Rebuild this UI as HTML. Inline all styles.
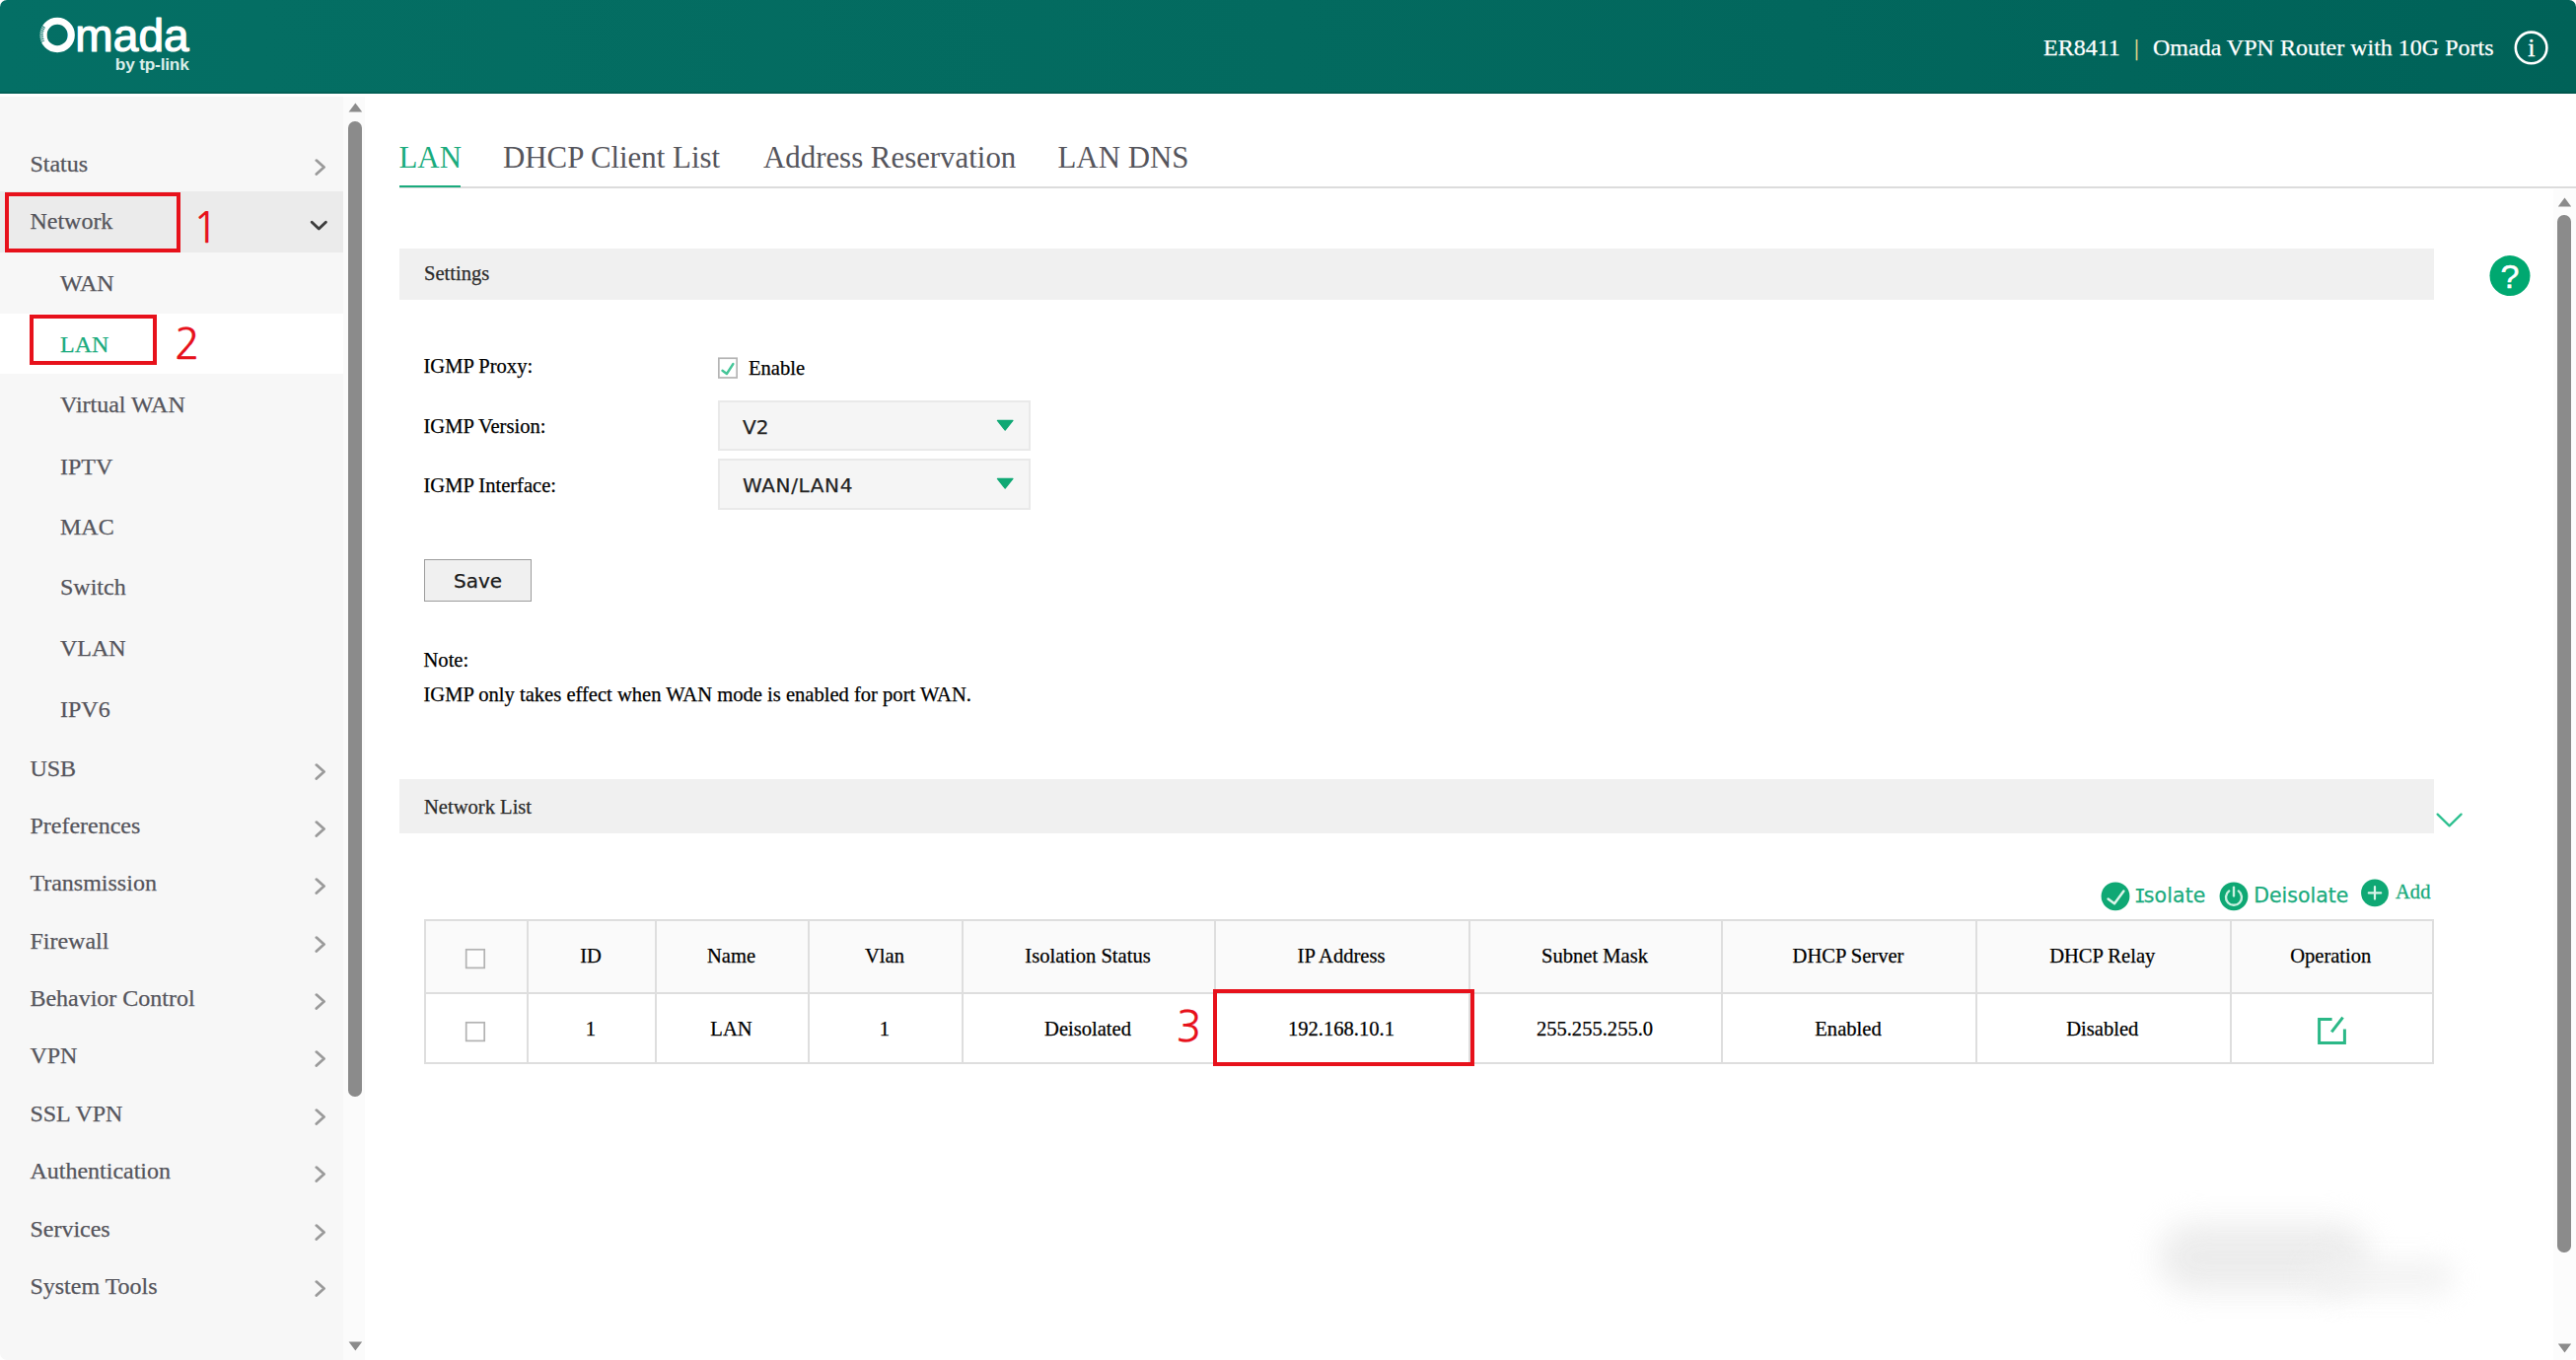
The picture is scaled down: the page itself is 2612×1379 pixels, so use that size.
<!DOCTYPE html>
<html lang="en">
<head>
<meta charset="utf-8">
<title>Omada ER8411 - Network - LAN</title>
<style>
*{box-sizing:border-box;margin:0;padding:0}
html,body{width:2612px;height:1379px;background:#fff;overflow:hidden}
body{font-family:"Liberation Serif",serif;color:#000;-webkit-text-stroke:.25px currentColor}
#app{position:relative;width:2612px;height:1379px;overflow:hidden;border-radius:7px;background:#fff}
.abs{position:absolute}
.t{position:absolute;white-space:nowrap}

/* header */
#hdr{position:absolute;left:0;top:0;width:2612px;height:95px;background:linear-gradient(to right,#046f65 0%,#046e63 10%,#036a5f 50%,#02675d 70%,#006359 95%,#006258 100%);box-shadow:inset 0 -2px 0 rgba(0,30,25,.16)}
#hdr .ttl{position:absolute;top:33px;height:30px;line-height:30px;font-size:24px;color:#fff;white-space:nowrap}

/* sidebar */
#side{position:absolute;left:0;top:97.5px;width:348px;height:1281.5px;background:#f7f7f7}
#strack{position:absolute;left:348px;top:97.5px;width:22px;height:1281.5px;background:#fbfbfb}
.mi{position:absolute;left:30.4px;height:30px;line-height:30px;font-size:24px;color:#55555c;white-space:nowrap}
.si{position:absolute;left:61px;height:30px;line-height:30px;font-size:24px;color:#55555c;white-space:nowrap}
.chev{position:absolute;left:319px;width:12px;height:18px}
.red{position:absolute;border:4px solid #e7111b}
.num{position:absolute;font-family:"NanumGothic","Liberation Sans",sans-serif;color:#e7111b;white-space:nowrap;line-height:1}

/* content */
.tab{position:absolute;-webkit-text-stroke:0;top:140px;height:40px;line-height:40px;font-size:30.86px;color:#55555c;white-space:nowrap}
.bar{position:absolute;left:404.5px;width:2063.5px;background:#f0f0f0}
.bar span{position:absolute;left:25.5px;font-size:20.57px;color:#2b2b2b;white-space:nowrap;line-height:26px;height:26px}
.lbl{position:absolute;left:429.5px;font-size:20.57px;line-height:26px;height:26px;white-space:nowrap;color:#000}
.sel{position:absolute;left:728px;width:317px;height:51px;background:#f5f5f5;border:2px solid #e9e9e9}
.sel span{position:absolute;left:23px;top:11px;font-family:"DejaVu Sans",sans-serif;font-size:20px;line-height:28px;color:#222;white-space:nowrap}
.sel svg{position:absolute;left:280px;top:17.2px}
.sans{font-family:"DejaVu Sans",sans-serif}
.g{color:#1aab7d}

/* table */
#tbl{position:absolute;left:430px;top:932px;width:2038px;height:147px}
.vl{position:absolute;top:0;width:2px;height:147px;background:#dedede}
.hl{position:absolute;left:0;width:2038px;height:2px;background:#dedede}
.th,.td{position:absolute;font-size:20.57px;line-height:26px;height:26px;white-space:nowrap;text-align:center;color:#000}
.cb{position:absolute;width:20px;height:20px;border:1.5px solid #b3b3b3;background:#fff}
</style>
</head>
<body>
<div id="app">

<!-- ===== HEADER ===== -->
<div id="hdr">
  <svg class="abs" style="left:30px;top:8px" width="180" height="78" viewBox="0 0 180 78">
    <text font-family="Liberation Sans, sans-serif" fill="#fff"><tspan x="10.9" y="43.3" font-size="44">O</tspan><tspan x="46.3" y="43.5" font-size="46" stroke="#fff" stroke-width="1.2" stroke-linejoin="round" letter-spacing="0.1">mada</tspan></text>
    <circle cx="28.1" cy="27.5" r="14.2" fill="none" stroke="#fff" stroke-width="7.1"/>
    <path d="M14.15 18.77 A16.1 16.1 0 0 0 13.45 34.61" fill="none" stroke="#046f64" stroke-width="4.4" stroke-dasharray="0.95 0.95"/>
    <text x="86.8" y="62.6" font-family="Liberation Sans, sans-serif" font-weight="700" font-size="17.3" fill="#d9ede9" letter-spacing="-0.2">by tp-link</text>
  </svg>
  <div class="ttl" style="left:2072px">ER8411</div>
  <div class="ttl" style="left:2164px;color:#e6dc8e">|</div>
  <div class="ttl" style="left:2183px">Omada VPN Router with 10G Ports</div>
  <svg class="abs" style="left:2547px;top:29px" width="40" height="40" viewBox="0 0 40 40">
    <circle cx="19.6" cy="19.4" r="15.8" fill="none" stroke="#fff" stroke-width="2.6"/>
    <text x="19.8" y="28.4" text-anchor="middle" font-family="Liberation Serif, serif" font-size="26" fill="#fff" stroke="#fff" stroke-width=".4">i</text>
  </svg>
</div>

<!-- ===== SIDEBAR ===== -->
<div id="side"></div>
<div id="strack"></div>
<!--SIDE-->
<div class="abs" style="left:0;top:194px;width:348px;height:62px;background:#ebebeb"></div>
<div class="abs" style="left:0;top:318px;width:348px;height:61px;background:#fff"></div>
<div class="mi" style="top:151.4px">Status</div>
<svg class="chev" style="top:160.2px" viewBox="0 0 12 18"><path d="M1.8 2.6 L9.6 9.6 L1.8 16.6" fill="none" stroke="#9a9a9a" stroke-width="2.7" stroke-linecap="round" stroke-linejoin="round"/></svg>
<div class="mi" style="top:209.4px">Network</div>
<svg class="abs" style="left:312px;top:219.5px" width="24" height="18" viewBox="0 0 24 18"><path d="M4.2 5.2 L11.3 12 L18.4 5.2" fill="none" stroke="#3c3c3c" stroke-width="2.9" stroke-linecap="round" stroke-linejoin="round"/></svg>
<div class="mi" style="top:763.9px">USB</div>
<svg class="chev" style="top:772.7px" viewBox="0 0 12 18"><path d="M1.8 2.6 L9.6 9.6 L1.8 16.6" fill="none" stroke="#9a9a9a" stroke-width="2.7" stroke-linecap="round" stroke-linejoin="round"/></svg>
<div class="mi" style="top:821.7px">Preferences</div>
<svg class="chev" style="top:830.5px" viewBox="0 0 12 18"><path d="M1.8 2.6 L9.6 9.6 L1.8 16.6" fill="none" stroke="#9a9a9a" stroke-width="2.7" stroke-linecap="round" stroke-linejoin="round"/></svg>
<div class="mi" style="top:879.7px">Transmission</div>
<svg class="chev" style="top:888.5px" viewBox="0 0 12 18"><path d="M1.8 2.6 L9.6 9.6 L1.8 16.6" fill="none" stroke="#9a9a9a" stroke-width="2.7" stroke-linecap="round" stroke-linejoin="round"/></svg>
<div class="mi" style="top:938.8px">Firewall</div>
<svg class="chev" style="top:947.6px" viewBox="0 0 12 18"><path d="M1.8 2.6 L9.6 9.6 L1.8 16.6" fill="none" stroke="#9a9a9a" stroke-width="2.7" stroke-linecap="round" stroke-linejoin="round"/></svg>
<div class="mi" style="top:997.1px">Behavior Control</div>
<svg class="chev" style="top:1005.9px" viewBox="0 0 12 18"><path d="M1.8 2.6 L9.6 9.6 L1.8 16.6" fill="none" stroke="#9a9a9a" stroke-width="2.7" stroke-linecap="round" stroke-linejoin="round"/></svg>
<div class="mi" style="top:1055.4px">VPN</div>
<svg class="chev" style="top:1064.2px" viewBox="0 0 12 18"><path d="M1.8 2.6 L9.6 9.6 L1.8 16.6" fill="none" stroke="#9a9a9a" stroke-width="2.7" stroke-linecap="round" stroke-linejoin="round"/></svg>
<div class="mi" style="top:1113.7px">SSL VPN</div>
<svg class="chev" style="top:1122.5px" viewBox="0 0 12 18"><path d="M1.8 2.6 L9.6 9.6 L1.8 16.6" fill="none" stroke="#9a9a9a" stroke-width="2.7" stroke-linecap="round" stroke-linejoin="round"/></svg>
<div class="mi" style="top:1172.0px">Authentication</div>
<svg class="chev" style="top:1180.8px" viewBox="0 0 12 18"><path d="M1.8 2.6 L9.6 9.6 L1.8 16.6" fill="none" stroke="#9a9a9a" stroke-width="2.7" stroke-linecap="round" stroke-linejoin="round"/></svg>
<div class="mi" style="top:1230.9px">Services</div>
<svg class="chev" style="top:1239.7px" viewBox="0 0 12 18"><path d="M1.8 2.6 L9.6 9.6 L1.8 16.6" fill="none" stroke="#9a9a9a" stroke-width="2.7" stroke-linecap="round" stroke-linejoin="round"/></svg>
<div class="mi" style="top:1288.6px">System Tools</div>
<svg class="chev" style="top:1297.4px" viewBox="0 0 12 18"><path d="M1.8 2.6 L9.6 9.6 L1.8 16.6" fill="none" stroke="#9a9a9a" stroke-width="2.7" stroke-linecap="round" stroke-linejoin="round"/></svg>
<div class="si" style="top:271.9px">WAN</div>
<div class="si" style="top:333.6px;color:#1aab7d">LAN</div>
<div class="si" style="top:395.3px">Virtual WAN</div>
<div class="si" style="top:458.0px">IPTV</div>
<div class="si" style="top:518.7px">MAC</div>
<div class="si" style="top:580.4px">Switch</div>
<div class="si" style="top:642.2px">VLAN</div>
<div class="si" style="top:703.9px">IPV6</div>
<div class="red" style="left:5px;top:195px;width:178px;height:61px"></div>
<div class="num" style="left:195.5px;top:210.3px;font-size:42.6px">1</div>
<div class="red" style="left:29.5px;top:318.5px;width:129.8px;height:51.6px"></div>
<div class="num" style="left:177px;top:327.9px;font-size:42.6px">2</div>
<svg class="abs" style="left:353px;top:103px" width="15" height="12" viewBox="0 0 15 12"><path d="M0.6 10.4 L7.4 1.6 L14.2 10.4 Z" fill="#8b8b8b"/></svg>
<div class="abs" style="left:353.4px;top:123px;width:13.6px;height:988.5px;border-radius:6.8px;background:#8b8b8b"></div>
<svg class="abs" style="left:353px;top:1359px" width="15" height="12" viewBox="0 0 15 12"><path d="M0.6 1.6 L14.2 1.6 L7.4 10.4 Z" fill="#8b8b8b"/></svg>
<!--/SIDE-->

<!-- ===== CONTENT ===== -->
<!--CONTENT-->
<div class="tab" style="left:404.5px;color:#1aab7d">LAN</div>
<div class="tab" style="left:510px">DHCP Client List</div>
<div class="tab" style="left:774px">Address Reservation</div>
<div class="tab" style="left:1072.5px">LAN DNS</div>
<div class="abs" style="left:404.5px;top:189px;width:2208px;height:2px;background:#dcdcdc"></div>
<div class="abs" style="left:404.5px;top:188px;width:62.5px;height:2px;background:#1aab7d"></div>
<div class="bar" style="top:252px;height:52px"><span style="top:12px">Settings</span></div>
<svg class="abs" style="left:2524px;top:259px" width="42" height="42" viewBox="0 0 42 42"><circle cx="21" cy="20.6" r="20.5" fill="#00a870"/><text x="21" y="32.6" text-anchor="middle" font-family="Liberation Sans, sans-serif" font-size="34" fill="#fff" stroke="#fff" stroke-width=".5">?</text></svg>
<div class="lbl" style="top:358.1px">IGMP Proxy:</div>
<div class="lbl" style="top:419.3px">IGMP Version:</div>
<div class="lbl" style="top:478.8px">IGMP Interface:</div>
<svg class="abs" style="left:726px;top:360px" width="26" height="28" viewBox="0 0 26 28"><rect x="2.85" y="3.25" width="18.3" height="19.7" fill="#fff" stroke="#b4b4b4" stroke-width="1.7"/><path d="M6.5 15.7 L10.9 19 L17.4 9" fill="none" stroke="#45c598" stroke-width="2.4" stroke-linecap="round" stroke-linejoin="round"/></svg>
<div class="lbl" style="left:759px;top:359.6px">Enable</div>
<div class="sel" style="top:406px"><span>V2</span><svg width="20" height="14" viewBox="0 0 20 14"><path d="M1.4 1.4 L17 1.4 L9.2 11.2 Z" fill="#0fa874" stroke="#0fa874" stroke-width="1.2" stroke-linejoin="round"/></svg></div>
<div class="sel" style="top:465.3px;height:51.5px"><span style="letter-spacing:.62px">WAN/LAN4</span><svg width="20" height="14" viewBox="0 0 20 14"><path d="M1.4 1.4 L17 1.4 L9.2 11.2 Z" fill="#0fa874" stroke="#0fa874" stroke-width="1.2" stroke-linejoin="round"/></svg></div>
<div class="abs sans" style="left:430px;top:567px;width:109px;height:43px;background:#f0f0f0;border:1.4px solid #9c9c9c;font-size:20px;line-height:28px;padding-top:6.9px;text-align:center;color:#1a1a1a">Save</div>
<div class="lbl" style="top:656.3px">Note:</div>
<div class="lbl" style="top:690.6px">IGMP only takes effect when WAN mode is enabled for port WAN.</div>
<div class="bar" style="top:790px;height:54.5px"><span style="top:15px">Network List</span></div>
<svg class="abs" style="left:2468px;top:820px" width="32" height="24" viewBox="0 0 32 24"><path d="M3.6 5.6 L15.6 17.4 L27.6 5.6" fill="none" stroke="#2fc090" stroke-width="2.3" stroke-linecap="round" stroke-linejoin="round"/></svg>
<svg class="abs" style="left:2129px;top:893px" width="32" height="32" viewBox="0 0 32 32"><circle cx="16" cy="15.8" r="14.4" fill="#0fa874"/><path d="M8.6 18.6 L15 23.2 L24.4 10.6" fill="none" stroke="#dcf5ea" stroke-width="2.5" stroke-linecap="round" stroke-linejoin="round"/></svg>
<div class="t sans g" style="letter-spacing:.08px;-webkit-text-stroke:.25px #1aab7d;left:2165.6px;top:893.9px;font-size:20.5px;line-height:28px"><span style="font-family:DejaVu Sans Mono,monospace;font-size:19.5px;letter-spacing:-1.9px;margin-left:-1.6px">I</span>solate</div>
<svg class="abs" style="left:2249px;top:893px" width="32" height="32" viewBox="0 0 32 32"><circle cx="16" cy="15.8" r="14.4" fill="#0fa874"/><path d="M11.2 10.4 A8 8 0 1 0 20.8 10.4" fill="none" stroke="#c9f0e0" stroke-width="2.4" stroke-linecap="round"/><path d="M16 6.6 L16 15.4" fill="none" stroke="#c9f0e0" stroke-width="2.4" stroke-linecap="round"/></svg>
<div class="t sans g" style="-webkit-text-stroke:.25px #1aab7d;left:2285.2px;top:893.9px;font-size:20.5px;line-height:28px">Deisolate</div>
<svg class="abs" style="left:2392px;top:889px" width="32" height="32" viewBox="0 0 32 32"><circle cx="16" cy="16.4" r="13.9" fill="#0fa874"/><path d="M16 10.2 L16 22.6 M9.8 16.4 L22.2 16.4" fill="none" stroke="#d9f4ea" stroke-width="2.2" stroke-linecap="round"/></svg>
<div class="t g" style="-webkit-text-stroke:.35px #1aab7d;left:2429px;top:891.3px;font-size:20.57px;line-height:26px">Add</div>
<div id="tbl">
<div class="abs" style="left:0;top:0;width:2038px;height:74px;background:#fafafa"></div>
<div class="hl" style="top:0px"></div>
<div class="hl" style="top:73.5px"></div>
<div class="hl" style="top:145px"></div>
<div class="vl" style="left:0px"></div>
<div class="vl" style="left:104px"></div>
<div class="vl" style="left:234px"></div>
<div class="vl" style="left:389px"></div>
<div class="vl" style="left:545px"></div>
<div class="vl" style="left:801px"></div>
<div class="vl" style="left:1059px"></div>
<div class="vl" style="left:1315px"></div>
<div class="vl" style="left:1573px"></div>
<div class="vl" style="left:1830.5px"></div>
<div class="vl" style="left:2036px"></div>
<div class="th" style="left:105px;width:128px;top:24.3px">ID</div>
<div class="td" style="left:105px;width:128px;top:97.6px">1</div>
<div class="th" style="left:235px;width:153px;top:24.3px">Name</div>
<div class="td" style="left:235px;width:153px;top:97.6px">LAN</div>
<div class="th" style="left:390px;width:154px;top:24.3px">Vlan</div>
<div class="td" style="left:390px;width:154px;top:97.6px">1</div>
<div class="th" style="left:546px;width:254px;top:24.3px">Isolation Status</div>
<div class="td" style="left:546px;width:254px;top:97.6px">Deisolated</div>
<div class="th" style="left:802px;width:256px;top:24.3px">IP Address</div>
<div class="td" style="left:802px;width:256px;top:97.6px">192.168.10.1</div>
<div class="th" style="left:1060px;width:254px;top:24.3px">Subnet Mask</div>
<div class="td" style="left:1060px;width:254px;top:97.6px">255.255.255.0</div>
<div class="th" style="left:1316px;width:256px;top:24.3px">DHCP Server</div>
<div class="td" style="left:1316px;width:256px;top:97.6px">Enabled</div>
<div class="th" style="left:1574px;width:255.5px;top:24.3px">DHCP Relay</div>
<div class="td" style="left:1574px;width:255.5px;top:97.6px">Disabled</div>
<div class="th" style="left:1831.5px;width:203.5px;top:24.3px">Operation</div>
<svg class="abs" style="left:40px;top:28px" width="24" height="24" viewBox="0 0 24 24"><rect x="2.7" y="2.8" width="18.5" height="18.6" fill="#fdfdfd" stroke="#b2b2b2" stroke-width="1.7"/></svg>
<svg class="abs" style="left:40px;top:101.5px" width="24" height="24" viewBox="0 0 24 24"><rect x="2.7" y="2.8" width="18.5" height="18.6" fill="#fff" stroke="#b2b2b2" stroke-width="1.7"/></svg>
<svg class="abs" style="left:1917px;top:96px" width="36" height="36" viewBox="0 0 36 36"><path d="M17.6 5.4 L4.6 5.4 L4.6 29.4 L30.4 29.4 L30.4 15.6" fill="none" stroke="#2bb887" stroke-width="3" stroke-linejoin="miter"/><path d="M28.6 3.6 L17.2 18.4" fill="none" stroke="#2bb887" stroke-width="3"/></svg>
</div>
<div class="red" style="left:1229.5px;top:1002.5px;width:265.5px;height:78px"></div>
<div class="num" style="left:1192.5px;top:1020px;font-size:42.6px">3</div>
<div class="abs" style="left:2188px;top:1240px;width:215px;height:70px;border-radius:35px;background:#ebebeb;filter:blur(15px);opacity:.92"></div>
<div class="abs" style="left:2340px;top:1276px;width:150px;height:38px;border-radius:19px;background:#f1f1f1;filter:blur(13px);opacity:.8"></div>
<div class="abs" style="left:2589px;top:192px;width:23px;height:1187px;background:#fcfcfc"></div>
<svg class="abs" style="left:2593px;top:198.5px" width="15" height="12" viewBox="0 0 15 12"><path d="M0.8 10.4 L7.5 1.4 L14.2 10.4 Z" fill="#8b8b8b"/></svg>
<div class="abs" style="left:2593px;top:218px;width:14px;height:1051.5px;border-radius:6.75px;background:#8b8b8b"></div>
<svg class="abs" style="left:2593px;top:1360.5px" width="15" height="12" viewBox="0 0 15 12"><path d="M0.8 1.4 L14.2 1.4 L7.5 10.6 Z" fill="#8b8b8b"/></svg>
<!--/CONTENT-->

</div>
</body>
</html>
